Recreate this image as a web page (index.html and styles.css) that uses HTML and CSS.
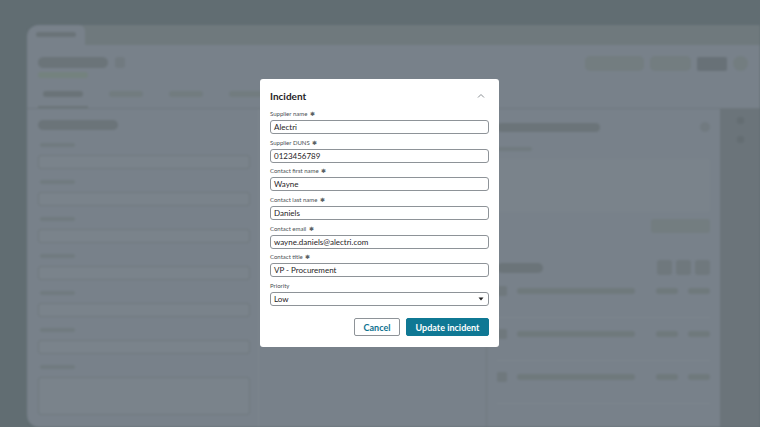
FILE: index.html
```html
<!DOCTYPE html>
<html lang="en">
<head>
    <meta charset="UTF-8">
    <meta name="viewport" content="width=device-width, initial-scale=1.0">
    <title>Incident</title>
    <link rel="stylesheet" href="styles.css">
</head>
<body>
    <div class="frame">
        <div class="app">
            <div class="tabstrip">
                <div class="tab"><span class="sk sk-tab"></span></div>
            </div>
            <div class="header">
                <div class="header-row">
                    <div class="title-group">
                        <span class="sk sk-title"></span>
                        <span class="sk sk-square"></span>
                    </div>
                    <div class="actions">
                        <span class="sk sk-btn1"></span>
                        <span class="sk sk-btn2"></span>
                        <span class="sk sk-btn3"></span>
                        <span class="sk sk-circle"></span>
                    </div>
                </div>
                <span class="sk sk-sub"></span>
                <div class="tabs">
                    <div class="tabitem active"><span class="sk sk-t1"></span></div>
                    <div class="tabitem"><span class="sk sk-t2"></span></div>
                    <div class="tabitem"><span class="sk sk-t2"></span></div>
                    <div class="tabitem"><span class="sk sk-t2"></span></div>
                </div>
            </div>
            <div class="body">
                <div class="left">
                    <span class="sk sk-section"></span>
                    <div class="fake-field"><span class="sk sk-label"></span><div class="fake-input"></div></div>
                    <div class="fake-field"><span class="sk sk-label"></span><div class="fake-input"></div></div>
                    <div class="fake-field"><span class="sk sk-label"></span><div class="fake-input"></div></div>
                    <div class="fake-field"><span class="sk sk-label"></span><div class="fake-input"></div></div>
                    <div class="fake-field"><span class="sk sk-label"></span><div class="fake-input"></div></div>
                    <div class="fake-field"><span class="sk sk-label"></span><div class="fake-input"></div></div>
                    <div class="fake-field"><span class="sk sk-label"></span><div class="fake-input tall"></div></div>
                </div>
                <div class="middle"></div>
                <div class="right">
                    <div class="card-head">
                        <span class="sk sk-rtitle"></span>
                        <span class="sk sk-dot"></span>
                    </div>
                    <span class="sk sk-label"></span>
                    <div class="fake-box"></div>
                    <div class="box-actions"><span class="sk sk-rbtn"></span></div>
                    <div class="list-head">
                        <span class="sk sk-ltitle"></span>
                        <div class="icon-btns">
                            <span class="sk sk-ib"></span>
                            <span class="sk sk-ib"></span>
                            <span class="sk sk-ib"></span>
                        </div>
                    </div>
                    <div class="list-row">
                        <span class="sk sk-check"></span>
                        <span class="sk sk-line"></span>
                        <span class="sk sk-meta"></span>
                        <span class="sk sk-meta2"></span>
                    </div>
                    <div class="list-row">
                        <span class="sk sk-check"></span>
                        <span class="sk sk-line"></span>
                        <span class="sk sk-meta"></span>
                        <span class="sk sk-meta2"></span>
                    </div>
                    <div class="list-row">
                        <span class="sk sk-check"></span>
                        <span class="sk sk-line"></span>
                        <span class="sk sk-meta"></span>
                        <span class="sk sk-meta2"></span>
                    </div>
                </div>
                <div class="rail">
                    <span class="sk sk-rail"></span>
                    <span class="sk sk-rail"></span>
                </div>
            </div>
        </div>
    </div>

    <div class="overlay">
        <div class="modal">
            <div class="modal-head">
                <h2>Incident</h2>
                <svg class="chevron" width="8" height="6" viewBox="0 0 8 6">
                    <path d="M1 4.5 L4 1.5 L7 4.5" fill="none" stroke="#8a8f94" stroke-width="1"/>
                </svg>
            </div>
            <div class="field">
                <label>Supplier name <span class="req">✱</span></label>
                <div class="input">Alectri</div>
            </div>
            <div class="field">
                <label>Supplier DUNS <span class="req">✱</span></label>
                <div class="input">0123456789</div>
            </div>
            <div class="field">
                <label>Contact first name <span class="req">✱</span></label>
                <div class="input">Wayne</div>
            </div>
            <div class="field">
                <label>Contact last name <span class="req">✱</span></label>
                <div class="input">Daniels</div>
            </div>
            <div class="field">
                <label>Contact email <span class="req">✱</span></label>
                <div class="input">wayne.daniels@alectri.com</div>
            </div>
            <div class="field">
                <label>Contact title <span class="req">✱</span></label>
                <div class="input">VP - Procurement</div>
            </div>
            <div class="field">
                <label>Priority</label>
                <div class="input select">
                    <span>Low</span>
                    <svg width="6" height="4" viewBox="0 0 6 4"><path d="M0.5 0.5 L5.5 0.5 L3 3.5 Z" fill="#222"/></svg>
                </div>
            </div>
            <div class="modal-foot">
                <button class="btn btn-secondary">Cancel</button>
                <button class="btn btn-primary">Update incident</button>
            </div>
        </div>
    </div>
</body>
</html>
```

FILE: styles.css
```css
body { margin: 0; width: 760px; height: 427px; overflow: hidden; background: #616d72; font-family: Lato, "Open Sans", sans-serif; }

/* blurred app behind the dialog */
.frame { padding: 25px 0 0 27px; height: 402px; box-sizing: border-box; }
.app { height: 402px; background: #78818a; border-radius: 12px 0 0 12px; overflow: hidden; display: flex; flex-direction: column; filter: blur(0.8px); }
.sk { display: block; background: #6b7479; border-radius: 6px; }

.tabstrip { height: 20px; background: #6f797d; display: flex; }
.tab { width: 58px; background: #78818a; border-radius: 10px 6px 0 0; padding: 7px 0 0 9px; box-sizing: border-box; }
.sk-tab { width: 40px; height: 5px; background: #6a7378; }

.header { padding: 11px 12px 0 11px; border-bottom: 1px solid #6e777d; display: flex; flex-direction: column; }
.header-row { display: flex; justify-content: space-between; align-items: flex-start; }
.title-group { display: flex; gap: 7px; padding-top: 1px; }
.sk-title { width: 70px; height: 11px; }
.sk-square { width: 10px; height: 11px; border-radius: 3px; background: #717a80; }
.actions { display: flex; gap: 6px; align-items: center; }
.sk-btn1 { width: 59px; height: 15px; border-radius: 5px; background: #737d80; }
.sk-btn2 { width: 41px; height: 15px; border-radius: 5px; background: #737d80; }
.sk-btn3 { width: 30px; height: 14px; border-radius: 2px; background: #687177; }
.sk-circle { width: 15px; height: 15px; border-radius: 50%; background: #737d80; }
.sk-sub { width: 50px; height: 6px; margin-top: 1px; background: #74827e; }
.tabs { display: flex; gap: 16px; margin-top: 11px; }
.tabitem { padding: 2px 5px 9px; }
.tabitem.active { border-bottom: 2px solid #6b7579; }
.sk-t1 { width: 40px; height: 6px; background: #6a7378; }
.sk-t2 { width: 34px; height: 6px; background: #727c7f; }

.body { flex: 1; display: flex; }
.left { width: 212px; padding: 11px 0 0 11px; display: flex; flex-direction: column; }
.sk-section { width: 80px; height: 10px; margin-bottom: 13px; }
.fake-field { display: flex; flex-direction: column; gap: 8px; margin-bottom: 11px; }
.sk-label { width: 35px; height: 4px; background: #707a7f; margin-left: 2px; }
.fake-input { height: 12px; border: 1px solid #6f787e; border-radius: 3px; background: #7a838b; }
.fake-input.tall { height: 36px; }
.middle { width: 8px; border-right: 1px solid #7e868d; }
.right { width: 234px; margin-left: 227px; padding: 13px 10px 0 10px; box-sizing: border-box; border-left: 1px solid #6f787e; display: flex; flex-direction: column; }
.card-head { display: flex; justify-content: space-between; align-items: center; }
.sk-rtitle { width: 103px; height: 9px; }
.sk-dot { width: 10px; height: 10px; border-radius: 50%; background: #717a80; }
.right .sk-label { margin: 15px 0 8px; }
.fake-box { height: 53px; background: #7a838b; border-radius: 2px; }
.box-actions { display: flex; justify-content: flex-end; margin-top: 7px; }
.sk-rbtn { width: 59px; height: 14px; border-radius: 3px; background: #737d80; }
.list-head { display: flex; justify-content: space-between; align-items: center; margin-top: 27px; }
.sk-ltitle { width: 46px; height: 10px; }
.icon-btns { display: flex; gap: 4px; }
.sk-ib { width: 15px; height: 15px; border-radius: 3px; background: #6f787d; }
.list-row { display: flex; align-items: flex-start; gap: 10px; height: 43px; box-sizing: border-box; padding-top: 13px; border-bottom: 1px solid #7e868d; }
.sk-check { width: 10px; height: 10px; border-radius: 2px; background: #6f787d; margin-top: -2px; }
.sk-line { width: 118px; height: 6px; background: #6f797c; }
.sk-meta { width: 22px; height: 6px; margin-left: auto; background: #6f797c; }
.sk-meta2 { width: 22px; height: 6px; background: #6f797c; }
.rail { flex: 1; background: #6b747a; display: flex; flex-direction: column; align-items: center; gap: 12px; padding-top: 8px; }
.sk-rail { width: 7px; height: 7px; border-radius: 2px; background: #646d72; }

/* dialog */
.overlay { position: fixed; inset: 0; padding: 79px 0 0 260px; }
.modal { width: 239px; height: 268px; box-sizing: border-box; background: #fff; border-radius: 3px; padding: 10px; display: flex; flex-direction: column; gap: 4.7px; }
.modal-head { display: flex; justify-content: space-between; align-items: center; height: 14px; margin-bottom: 2.3px; }
.modal-head h2 { margin: 0; font-size: 10px; font-weight: 700; color: #1f2326; }
.chevron { margin-right: 4px; }
.field { display: flex; flex-direction: column; gap: 2px; }
.field label { font-size: 6px; line-height: 8px; color: #4a4f54; }
.req { color: #5a5f64; font-size: 6px; margin-left: 1px; }
.input { height: 14px; box-sizing: border-box; border: 1px solid #8e9398; border-radius: 3px; padding: 0 3px; font-size: 8px; line-height: 12px; color: #1f2326; }
.select { display: flex; justify-content: space-between; align-items: center; padding-right: 4px; }
.modal-foot { display: flex; justify-content: flex-end; gap: 6px; margin-top: 7.5px; }
.btn { height: 18px; border-radius: 2px; font-family: Lato, "Open Sans", sans-serif; font-size: 9px; font-weight: 700; padding: 0; }
.btn-secondary { width: 46px; background: #fff; border: 1px solid #8e9398; color: #0e7391; }
.btn-primary { width: 83px; background: #0f7894; border: 1px solid #0f7894; color: #fff; }
```
